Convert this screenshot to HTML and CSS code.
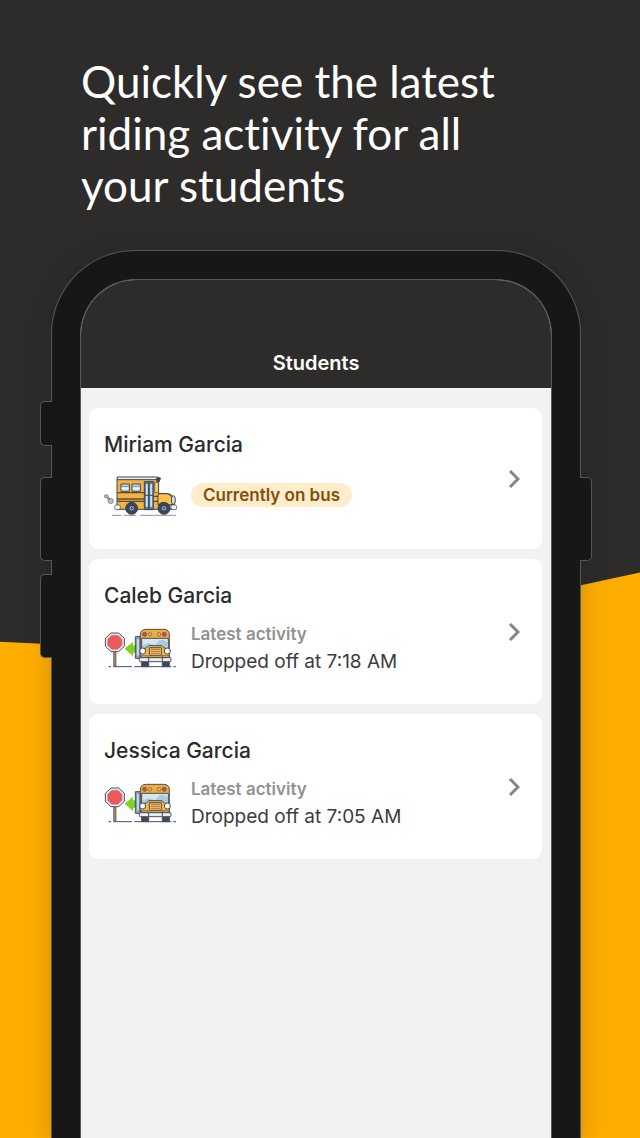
FILE: index.html
```html
<!DOCTYPE html>
<html lang="en">
<head>
<meta charset="utf-8">
<meta name="viewport" content="width=device-width, initial-scale=1">
<title>Students</title>
<link rel="stylesheet" href="styles.css">
</head>
<body>
<svg width="0" height="0" class="symbols" aria-hidden="true">
  <symbol id="bus-side" viewBox="24 21 222 135">
    <g stroke="#3c4659" stroke-width="3" stroke-linejoin="round">
      <path d="M48 148H75M83 148H121M133 148H240" stroke="#8c939d" fill="none"/>
      <g stroke="#6b7278" stroke-width="2">
        <ellipse cx="31" cy="91" rx="6" ry="5" fill="#aeb4b9"/>
        <circle cx="44" cy="105" r="8" fill="#b9bfc3"/>
        <circle cx="38" cy="98" r="3" fill="#8c939d"/>
      </g>
      <path d="M63 38H188V82L218 83Q231 86 235 100V130H63Z" fill="#f5b23c"/>
      <path d="M64 33H183L193 37L187 48L183 41H64Z" fill="#eef0ed"/>
      <path d="M182 36H193L189 48H183Z" fill="#3c4659"/>
      <path d="M63 80H145M63 99H145M63 106H145M172 91H214M172 106H193" fill="none" stroke="#5a4940" stroke-width="4"/>
      <path d="M75 54H100V76H75ZM108 54H133V76H108Z" fill="#c5e3f8"/>
      <path d="M77 67H98M110 67H131" stroke="#fff" stroke-width="4"/>
      <path d="M77 61H98M110 61H131" stroke="#6b91b5" stroke-width="3"/>
      <path d="M145 47H172V131H145Z" fill="#547796"/>
      <path d="M149 53H156V124H149ZM162 53H169V124H162Z" fill="#d4ebfa" stroke-width="1"/>
      <path d="M158 49V130M147 88H171" fill="none"/>
      <path d="M176 49H187V80H176Z" fill="#ffcb64" stroke-width="2"/>
      <path d="M188 83H213Q232 88 236 116H216Q201 102 186 117V91Z" fill="#ffc14a"/>
      <ellipse cx="232" cy="102" rx="6" ry="13" fill="#dbe2e6"/>
      <rect x="56" y="117" width="17" height="14" rx="5" fill="#f2f4f4" stroke-width="2"/>
      <rect x="225" y="117" width="17" height="14" rx="5" fill="#f2f4f4" stroke-width="2"/>
      <circle cx="107" cy="127" r="18" fill="#39455a"/>
      <circle cx="204" cy="127" r="18" fill="#39455a"/>
      <circle cx="107" cy="127" r="8" fill="#a4abb5"/>
      <circle cx="204" cy="127" r="8" fill="#a4abb5"/>
      <circle cx="107" cy="127" r="2" fill="#39455a"/>
      <circle cx="204" cy="127" r="2" fill="#39455a"/>
    </g>
  </symbol>
  <symbol id="bus-stop" viewBox="24 33 222 135">
    <g stroke="#4a4e60" stroke-width="3" stroke-linejoin="round">
      <path d="M38 155H45M52 155H108M115 155H226M232 155H240" fill="none"/>
      <path d="M53 110H60V154H53Z" fill="#ad8460" stroke-width="2"/>
      <path d="M45 54H68L85 70V94L68 110H45L28 94V70Z" fill="#eceeed"/>
      <path d="M47 61H66L78 73V91L66 103H47L35 91V73Z" fill="#e9595d" stroke="#c98080" stroke-width="2"/>
      <path d="M86 101L111 80V91H121V113H111V124Z" fill="#80d321" stroke="none"/>
      <path d="M118 65H133V130H118Z" fill="#88aac4"/>
      <path d="M122 71H130V123H122Z" fill="#c9deea" stroke-width="1"/>
      <path d="M137 141H158V155H137ZM199 141H220V155H199Z" fill="#3e4558"/>
      <path d="M133 128V60Q133 43 151 43H203Q220 43 220 60V128Z" fill="#efab3d"/>
      <path d="M137 70H217V100H137Z" fill="#d4e7f0"/>
      <path d="M139 91L158 85L178 91L190 76L204 75L215 83V99H139Z" fill="#a5cad9" stroke="none"/>
      <g stroke-width="2">
        <circle cx="146" cy="58" r="6" fill="#ca504c"/><circle cx="162" cy="58" r="5" fill="#ffc350"/>
        <circle cx="189" cy="58" r="5" fill="#ffc350"/><circle cx="205" cy="58" r="6" fill="#ca504c"/>
      </g>
      <path d="M133 103L151 99L158 92H198L205 99L220 103V127H133Z" fill="#f8b540"/>
      <path d="M160 98H196V121H160Z" fill="#ffc55c"/>
      <path d="M164 103H192M164 109H192M164 115H192" stroke="#66513d" fill="none" stroke-width="2"/>
      <circle cx="140" cy="108" r="9" fill="#fff"/><circle cx="214" cy="108" r="9" fill="#fff"/>
      <path d="M136 122H156V128H136ZM199 122H219V128H199Z" fill="#f2a93b" stroke-width="2"/>
      <rect x="130" y="128" width="95" height="12" rx="3" fill="#e8edf0"/>
      <path d="M158 129V139M199 129V139" fill="none"/>
    </g>
  </symbol>
  <symbol id="chevron" viewBox="0 0 12 20">
    <path d="M2 2L10 10L2 18" fill="none" stroke="#858585" stroke-width="3"/>
  </symbol>
</svg>
<main class="page">
  <h1 class="headline">Quickly see the latest riding activity for all your students</h1>
  <div class="phone">
    <span class="key key-mute"></span>
    <span class="key key-up"></span>
    <span class="key key-down"></span>
    <span class="key key-power"></span>
    <section class="screen">
      <header class="bar"><h2 class="bar-title">Students</h2></header>
      <ul class="list">
        <li><a class="card" href="#miriam">
          <div class="info">
            <h3 class="name">Miriam Garcia</h3>
            <div class="status">
              <svg class="picture" aria-hidden="true"><use href="#bus-side"/></svg>
              <span class="pill">Currently on bus</span>
            </div>
          </div>
          <svg class="chevron" aria-hidden="true"><use href="#chevron"/></svg>
        </a></li>
        <li><a class="card" href="#caleb">
          <div class="info">
            <h3 class="name">Caleb Garcia</h3>
            <div class="status">
              <svg class="picture" aria-hidden="true"><use href="#bus-stop"/></svg>
              <div class="activity"><p class="label">Latest activity</p><p class="event">Dropped off at 7:18 AM</p></div>
            </div>
          </div>
          <svg class="chevron" aria-hidden="true"><use href="#chevron"/></svg>
        </a></li>
        <li><a class="card" href="#jessica">
          <div class="info">
            <h3 class="name">Jessica Garcia</h3>
            <div class="status">
              <svg class="picture" aria-hidden="true"><use href="#bus-stop"/></svg>
              <div class="activity"><p class="label">Latest activity</p><p class="event">Dropped off at 7:05 AM</p></div>
            </div>
          </div>
          <svg class="chevron" aria-hidden="true"><use href="#chevron"/></svg>
        </a></li>
      </ul>
    </section>
  </div>
</main>
</body>
</html>
```
FILE: styles.css
```css
* { box-sizing: border-box; }
body, h1, h2, h3, p, ul { margin: 0; padding: 0; }
body { font-family: Inter, "Liberation Sans", sans-serif; color: #2b2b2b; }
.symbols { position: absolute; }

.page {
  position: relative;
  isolation: isolate;
  display: flex;
  flex-direction: column;
  min-height: 100vh;
  overflow: hidden;
  padding: 55px 59px 0 51px;
  background: #2e2c2a;
}
/* orange ground behind the phone */
.page::before {
  content: "";
  position: absolute;
  inset: 0;
  z-index: -1;
  background: #ffae00;
  clip-path: polygon(0 56.4%, 41% 57.5%, 100% 50.3%, 100% 100%, 0 100%);
}
.headline {
  max-width: 440px;
  margin: 0 0 39px 30px;
  font: 400 44px/52px Lato, "Open Sans", sans-serif;
  font-variant-ligatures: none;
  color: #fff;
}

.phone {
  position: relative;
  flex: 1;
  display: flex;
  padding: 28px 28px 0;
  background: #171717;
  border: 1px solid #575757;
  border-bottom: 0;
  border-radius: 84px 84px 0 0;
  box-shadow: 0 4px 28px rgba(0, 0, 0, .2);
}
.key {
  position: absolute;
  left: -12px;
  width: 12px;
  height: 84px;
  background: #171717;
  border: 1px solid #575757;
  border-right: 0;
  border-radius: 5px 0 0 5px;
}
.key-mute { top: 150px; height: 45px; }
.key-up { top: 226px; }
.key-down { top: 323px; }
.key-power {
  top: 226px;
  left: auto;
  right: -12px;
  border-right: 1px solid #575757;
  border-left: 0;
  border-radius: 0 5px 5px 0;
}

.screen {
  flex: 1;
  min-width: 0;
  overflow: hidden;
  background: #f2f2f2;
  border: 1px solid #575757;
  border-bottom: 0;
  border-radius: 56px 56px 0 0;
}
.bar { padding: 69px 16px 11px; background: #2e2c2a; text-align: center; }
.bar-title { font-size: 20px; line-height: 28px; font-weight: 600; color: #fff; }
.list { display: grid; gap: 10px; padding: 20px 9px 20px 8px; list-style: none; }
.card {
  display: flex;
  align-items: center;
  gap: 12px;
  padding: 23px 22px 29px 15px;
  background: #fff;
  border-radius: 9px;
  color: inherit;
  text-decoration: none;
}
.info { flex: 1; display: grid; gap: 11px; }
.name { font-size: 21px; line-height: 28px; font-weight: 500; }
.status { display: flex; align-items: center; gap: 13px; min-height: 50px; }
.picture { flex: none; width: 74px; height: 45px; }
.pill {
  padding: 0 12px;
  border-radius: 12px;
  background: #ffecca;
  color: #80500f;
  font-size: 17px;
  line-height: 24px;
  font-weight: 600;
}
.label { font-size: 17px; line-height: 27px; font-weight: 600; color: #929292; }
.event { font-size: 19px; line-height: 27px; color: #3c3c3c; }
.chevron { flex: none; width: 12px; height: 20px; margin-top: 6px; }
```
